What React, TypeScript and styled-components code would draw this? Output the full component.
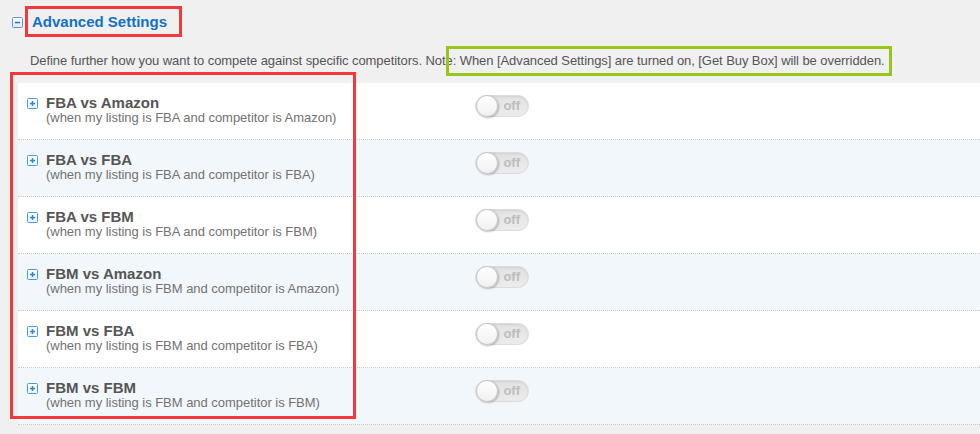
import React from "react";
import styled, { createGlobalStyle } from "styled-components";

const GlobalStyle = createGlobalStyle`
  html, body {
    margin: 0;
    padding: 0;
    background: #f0f0f0;
    font-family: "Liberation Sans", Arial, sans-serif;
  }
`;

const Page = styled.div`
  width: 980px;
  height: 434px;
  overflow: hidden;
  background: #f0f0f0;
`;

const Header = styled.div`
  display: flex;
  align-items: center;
  gap: 9px;
  padding: 13px 0 0 12px;
  height: 18px;
`;

const Title = styled.h2`
  position: relative;
  margin: 0;
  font-size: 15px;
  line-height: 18px;
  font-weight: bold;
  color: #1370c3;
`;

const Annotation = styled.div<{ $color: string; $top: number; $left: number; $w: number; $h: number }>`
  position: absolute;
  top: ${(p) => p.$top}px;
  left: ${(p) => p.$left}px;
  width: ${(p) => p.$w}px;
  height: ${(p) => p.$h}px;
  border: 3px solid ${(p) => p.$color};
  box-sizing: border-box;
  pointer-events: none;
`;

const Description = styled.p`
  position: relative;
  margin: 22px 0 0 30px;
  height: 16px;
  font-size: 13px;
  letter-spacing: -0.07px;
  line-height: 16px;
  color: #555;
  white-space: nowrap;
`;

const Table = styled.div`
  position: relative;
  margin: 14px 0 0 18px;
`;

const Row = styled.div<{ $alt: boolean }>`
  display: flex;
  align-items: flex-start;
  box-sizing: border-box;
  height: 57px;
  padding: 12px 0 0 9px;
  background: ${(p) => (p.$alt ? "#f2f7fb" : "#ffffff")};
  border-bottom: 1px dotted #c8c8c8;
`;

const Label = styled.div`
  display: grid;
  grid-template-columns: 11px auto;
  column-gap: 8px;
  align-items: center;
  width: 448px;
`;

const RowTitle = styled.div`
  font-size: 15px;
  line-height: 16px;
  font-weight: bold;
  color: #555;
`;

const RowSub = styled.div`
  grid-column: 2;
  font-size: 13px;
  line-height: 14px;
  letter-spacing: -0.03px;
  color: #727272;
`;

const Toggle = styled.div`
  position: relative;
  display: flex;
  align-items: center;
  justify-content: flex-end;
  box-sizing: border-box;
  width: 54px;
  height: 22px;
  padding-right: 8px;
  border-radius: 11px;
  background: linear-gradient(#e2e2e2, #ececec);
  border: 1px solid #dcdcdc;
  box-shadow: inset 0 1px 2px rgba(0, 0, 0, 0.08);
`;

const Knob = styled.span`
  position: absolute;
  left: 0px;
  top: -1px;
  width: 22px;
  height: 22px;
  border-radius: 50%;
  box-sizing: border-box;
  background: linear-gradient(#ffffff, #f1f1f1);
  border: 1px solid #c9c9c9;
  box-shadow: 1px 1px 2px rgba(0, 0, 0, 0.25);
`;

const OffText = styled.span`
  font-size: 13px;
  font-weight: bold;
  color: #bdbdbd;
  line-height: 14px;
`;

const BoxIcon = ({ plus }: { plus: boolean }) => (
  <svg width="11" height="11" viewBox="0 0 11 11">
    <defs>
      <linearGradient id={plus ? "gp" : "gm"} x1="0" y1="0" x2="0" y2="1">
        <stop offset="0" stopColor="#ffffff" />
        <stop offset="1" stopColor={plus ? "#eaf3fc" : "#dce9f7"} />
      </linearGradient>
    </defs>
    <rect x="0.5" y="0.5" width="10" height="10" rx="1" fill={`url(#${plus ? "gp" : "gm"})`} stroke={plus ? "#4a98e2" : "#5d95cf"} />
    <rect x="3" y="4.8" width="5" height="1.5" fill={plus ? "#2a86dc" : "#2f6fb3"} />
    {plus && <rect x="4.75" y="3" width="1.5" height="5" fill="#2a86dc" />}
  </svg>
);

const rows = [
  ["FBA vs Amazon", "(when my listing is FBA and competitor is Amazon)"],
  ["FBA vs FBA", "(when my listing is FBA and competitor is FBA)"],
  ["FBA vs FBM", "(when my listing is FBA and competitor is FBM)"],
  ["FBM vs Amazon", "(when my listing is FBM and competitor is Amazon)"],
  ["FBM vs FBA", "(when my listing is FBM and competitor is FBA)"],
  ["FBM vs FBM", "(when my listing is FBM and competitor is FBM)"],
];

export default function App() {
  return (
    <Page>
      <GlobalStyle />
      <Header>
        <BoxIcon plus={false} />
        <Title>
          Advanced Settings
          <Annotation $color="#f4383b" $top={-7} $left={-7} $w={157} $h={31} />
        </Title>
      </Header>
      <Description>
        Define further how you want to compete against specific competitors. Note: When [Advanced Settings] are turned
        on, [Get Buy Box] will be overridden.
        <Annotation $color="#98c51a" $top={-7} $left={416} $w={446} $h={30} />
      </Description>
      <Table>
        {rows.map(([t, s], i) => (
          <Row key={t} $alt={i % 2 === 1}>
            <Label>
              <BoxIcon plus />
              <RowTitle>{t}</RowTitle>
              <RowSub>{s}</RowSub>
            </Label>
            <Toggle>
              <Knob />
              <OffText>off</OffText>
            </Toggle>
          </Row>
        ))}
        <Annotation $color="#f4383b" $top={-11} $left={-8} $w={346} $h={347} />
      </Table>
    </Page>
  );
}
